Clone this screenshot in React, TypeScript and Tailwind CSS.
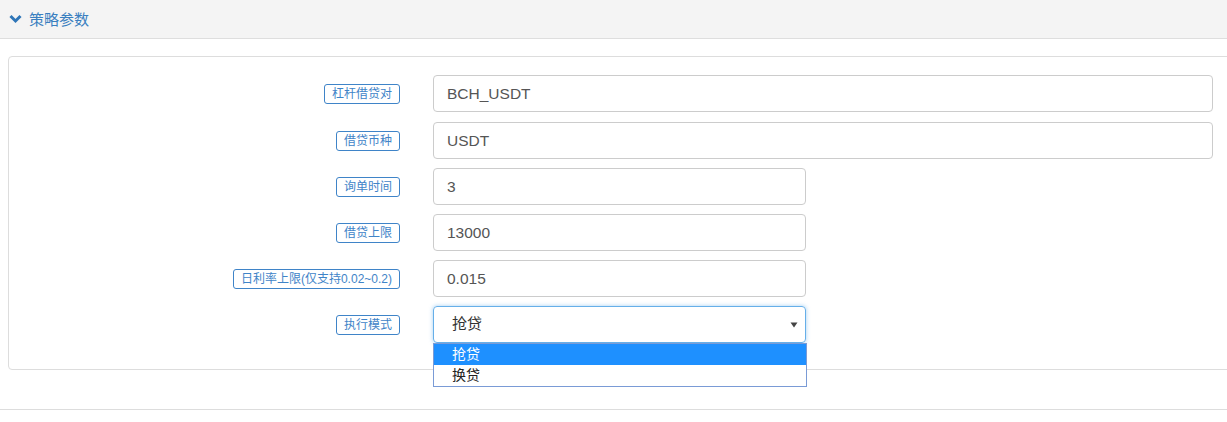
import React from "react";

const FONT = '"Liberation Sans", "Noto Sans CJK SC", sans-serif';

type Row = { label: string; value: string; wide?: boolean; select?: boolean };

const rows: Row[] = [
  { label: "杠杆借贷对", value: "BCH_USDT", wide: true },
  { label: "借贷币种", value: "USDT", wide: true },
  { label: "询单时间", value: "3" },
  { label: "借贷上限", value: "13000" },
  { label: "日利率上限(仅支持0.02~0.2)", value: "0.015" },
  { label: "执行模式", value: "抢贷", select: true },
];

export default function App() {
  return (
    <div className="w-[1227px] h-[422px] overflow-hidden bg-white" style={{ fontFamily: FONT }}>
      <div className="h-[39px] bg-[#f4f4f4] border-b border-[#dedede] flex items-center pl-[9px] gap-[7px]">
        <svg width="13" height="10" viewBox="0 0 13 10">
          <path d="M1.5 2 L6.5 7 L11.5 2" fill="none" stroke="#2f76b8" strokeWidth="3" />
        </svg>
        <span className="text-[15px] text-[#3a7fc0] leading-none">策略参数</span>
      </div>
      <div className="mt-[17px] ml-[8px] w-[1240px] h-[314px] border border-[#dddddd] rounded-[4px] pt-[18px]">
        <div className="flex flex-col gap-[9px]">
          {rows.map((r, i) => (
            <div key={r.label} className={`flex items-center ${i === 0 ? "mb-[1px]" : ""}`}>
              <div className="w-[391px] flex justify-end">
                <span className="border border-[#3f84c8] rounded-[3px] px-[7px] text-[12px] leading-[18px] text-[#3f84c8] whitespace-nowrap">
                  {r.label}
                </span>
              </div>
              {r.select ? (
                <div className="relative ml-[33px]">
                  <div className="w-[373px] h-[37px] border border-[#66afe9] rounded-[4px] shadow-[0_0_4px_rgba(102,175,233,0.6)] flex items-center justify-between pl-[18px] pr-[7px] text-[15px] text-[#333]">
                    <span>{r.value}</span>
                    <svg width="8" height="6" viewBox="0 0 8 6">
                      <path d="M0.5 0.5 L7.5 0.5 L4 5.5 Z" fill="#444" />
                    </svg>
                  </div>
                  <div className="absolute left-0 top-[37px] w-[374px] border border-[#7a9bd6] bg-white text-[14px] z-10">
                    <div className="h-[21px] bg-[#1e90ff] text-white pl-[18px] leading-[21px]">抢贷</div>
                    <div className="h-[21px] text-[#222] pl-[18px] leading-[21px]">换贷</div>
                  </div>
                </div>
              ) : (
                <div
                  className={`ml-[33px] h-[37px] border border-[#cccccc] rounded-[4px] flex items-center pl-[13px] text-[15.5px] text-[#555] ${
                    r.wide ? "w-[780px]" : "w-[373px]"
                  }`}
                >
                  {r.value}
                </div>
              )}
            </div>
          ))}
        </div>
      </div>
      <div className="mt-[39px] h-px bg-[#dddddd]" />
    </div>
  );
}
